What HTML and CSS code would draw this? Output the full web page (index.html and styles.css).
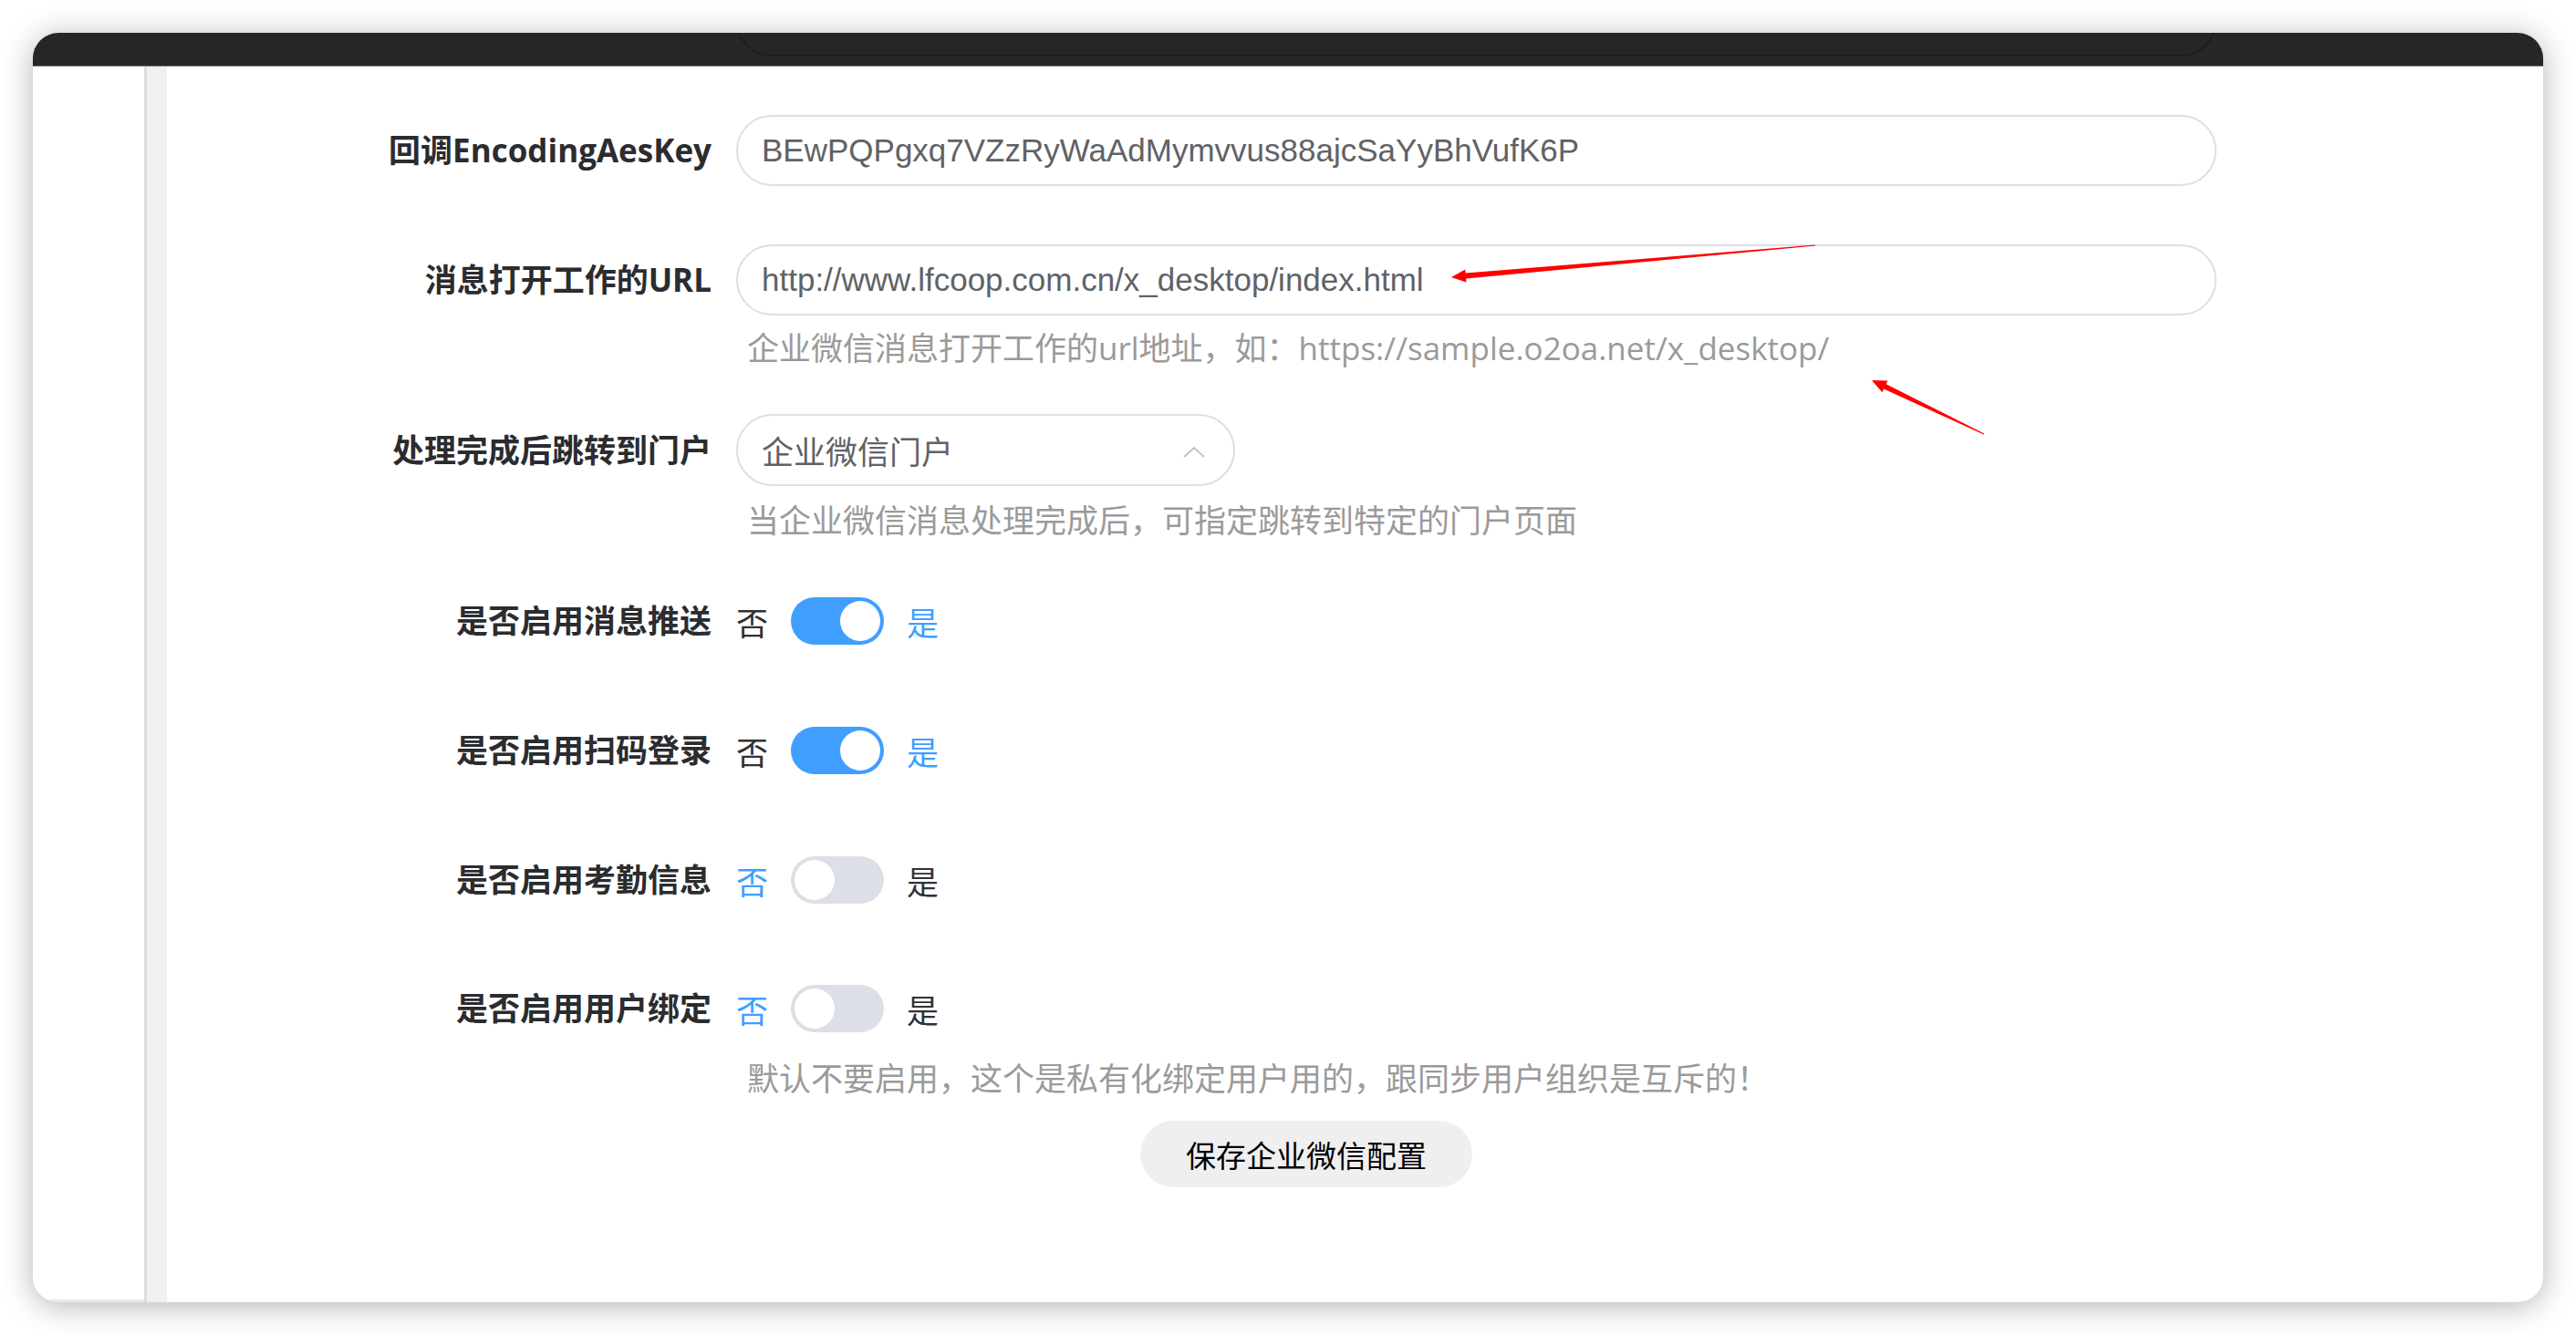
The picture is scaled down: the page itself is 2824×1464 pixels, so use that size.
FILE: index.html
```html
<!DOCTYPE html>
<html lang="zh-CN">
<head>
<meta charset="utf-8">
<title>企业微信配置</title>
<link rel="stylesheet" href="styles.css">
</head>
<body>
<div class="window">
  <div class="topbar">
    <div class="ghost-row">
      <div class="ghost-label">回调Token</div>
      <div class="ghost-input"></div>
    </div>
  </div>
  <div class="frame">
    <aside class="sidebar"></aside>
    <div class="gutter"></div>
    <main class="main">
      <div class="form-item item-key">
        <div class="label">回调EncodingAesKey</div>
        <div class="content">
          <div class="input">BEwPQPgxq7VZzRyWaAdMymvvus88ajcSaYyBhVufK6P</div>
        </div>
      </div>

      <div class="form-item item-url">
        <div class="label">消息打开工作的URL</div>
        <div class="content">
          <div class="input">http://www.lfcoop.com.cn/x_desktop/index.html</div>
          <div class="help help-url">企业微信消息打开工作的url地址，如：https://sample.o2oa.net/x_desktop/</div>
        </div>
      </div>

      <div class="form-item item-portal">
        <div class="label label-select">处理完成后跳转到门户</div>
        <div class="content">
          <div class="select">
            <span class="select-value">企业微信门户</span>
            <svg class="chevron" width="26" height="14" viewBox="0 0 26 14"><polyline points="2,12 13,2 24,12" fill="none" stroke="#c0c4cc" stroke-width="2"/></svg>
          </div>
          <div class="help help-portal">当企业微信消息处理完成后，可指定跳转到特定的门户页面</div>
        </div>
      </div>

      <div class="form-item item-switch">
        <div class="label label-switch">是否启用消息推送</div>
        <div class="content switch-row">
          <span class="sw-text">否</span>
          <span class="switch on"><span class="knob"></span></span>
          <span class="sw-text active">是</span>
        </div>
      </div>

      <div class="form-item item-switch">
        <div class="label label-switch">是否启用扫码登录</div>
        <div class="content switch-row">
          <span class="sw-text">否</span>
          <span class="switch on"><span class="knob"></span></span>
          <span class="sw-text active">是</span>
        </div>
      </div>

      <div class="form-item item-switch item-switch-3">
        <div class="label label-switch">是否启用考勤信息</div>
        <div class="content switch-row">
          <span class="sw-text active">否</span>
          <span class="switch"><span class="knob"></span></span>
          <span class="sw-text">是</span>
        </div>
      </div>

      <div class="form-item item-bind">
        <div class="label label-switch">是否启用用户绑定</div>
        <div class="content">
          <div class="switch-row">
            <span class="sw-text active">否</span>
            <span class="switch"><span class="knob"></span></span>
            <span class="sw-text">是</span>
          </div>
          <div class="help help-bind">默认不要启用，这个是私有化绑定用户用的，跟同步用户组织是互斥的！</div>
        </div>
      </div>

      <div class="button-row">
        <button class="save-btn" type="button">保存企业微信配置</button>
      </div>
    </main>
  </div>
</div>

<svg class="annotations" width="2824" height="1464" viewBox="0 0 2824 1464">
  <polygon fill="#ff0000" points="1591,304 1606.3,295.6 1606.6,299.6 1989.9,268.4 1990.1,269.6 1607.2,305.6 1607.5,309.6"/>
  <polygon fill="#ff0000" points="2052,417 2069.4,417.6 2067.7,421.2 2175.3,475.5 2174.7,476.5 2065.1,426.6 2063.4,430.2"/>
</svg>
</body>
</html>
```

FILE: styles.css
```css
html, body {
  margin: 0;
  padding: 0;
}

body {
  position: relative;
  width: 2824px;
  height: 1464px;
  overflow: hidden;
  background: #ffffff;
  font-family: "Open Sans", "Noto Sans CJK SC", sans-serif;
}

.window {
  margin: 36px 0 0 36px;
  width: 2752px;
  height: 1392px;
  border-radius: 28px;
  overflow: hidden;
  background: #ffffff;
  box-shadow: 0 4px 34px rgba(0, 0, 0, 0.30);
  display: flex;
  flex-direction: column;
}

.topbar {
  height: 36px;
  flex: 0 0 36px;
  background: #262626;
  border-bottom: 1px solid #808080;
  overflow: hidden;
}

.ghost-row {
  display: flex;
  align-items: flex-start;
  margin-top: -52px;
  margin-left: 371px;
}

.ghost-label {
  width: 400px;
  box-sizing: border-box;
  padding-right: 27px;
  margin-top: -14px;
  text-align: right;
  font-weight: 700;
  font-size: 35px;
  line-height: 78px;
  color: #141414;
}

.ghost-input {
  width: 1623px;
  height: 78px;
  box-sizing: border-box;
  border: 2px solid #1e1e1e;
  border-radius: 40px;
}

.frame {
  flex: 1;
  display: flex;
  min-height: 0;
}

.sidebar {
  width: 122px;
  flex: 0 0 122px;
  background: #ffffff;
  border-bottom: 3px solid #e6e8f0;
  box-sizing: border-box;
}

.gutter {
  width: 25px;
  flex: 0 0 25px;
  box-sizing: border-box;
  background: #f0f0f0;
  border-left: 3px solid #dcdcdc;
}

.main {
  flex: 1;
  padding: 53px 0 0 224px;
  box-sizing: border-box;
}

.form-item {
  display: flex;
  align-items: flex-start;
}

.item-key { margin-bottom: 64px; }
.item-url { margin-bottom: 47px; }
.item-portal { margin-bottom: 45px; }
.item-switch { margin-bottom: 62px; }
.item-switch-3 { margin-bottom: 61px; }

.label {
  width: 400px;
  flex: 0 0 400px;
  box-sizing: border-box;
  padding-right: 27px;
  text-align: right;
  font-weight: 700;
  font-size: 35px;
  line-height: 78px;
  color: #2b2c2f;
  white-space: nowrap;
}

.label-select { line-height: 79px; }
.label-switch { line-height: 80px; }

.content {
  display: flex;
  flex-direction: column;
}

.input {
  width: 1623px;
  height: 78px;
  box-sizing: border-box;
  border: 2px solid #dcdfe6;
  border-radius: 40px;
  padding: 0 26px;
  display: flex;
  align-items: center;
  font-family: "Liberation Sans", "Noto Sans CJK SC", sans-serif;
  font-size: 35px;
  color: #606266;
  white-space: nowrap;
}

.select {
  width: 547px;
  height: 79px;
  box-sizing: border-box;
  border: 2px solid #dcdfe6;
  border-radius: 40px;
  padding: 0 30px 0 26px;
  display: flex;
  align-items: center;
  justify-content: space-between;
  font-family: "Noto Sans CJK SC", sans-serif;
  font-size: 35px;
  color: #606266;
}

.select-value {
  line-height: 1;
}

.chevron {
  display: block;
  margin-top: 4px;
}

.help {
  padding-left: 12px;
  font-size: 35px;
  line-height: 50px;
  color: #9a9a9a;
  white-space: nowrap;
}

.help-url { margin-top: 11px; }
.help-portal { margin-top: 13px; }
.help-bind { margin-top: 12px; }

.switch-row {
  display: flex;
  flex-direction: row;
  align-items: center;
  height: 80px;
}

.sw-text {
  font-family: "Noto Sans CJK SC", sans-serif;
  font-size: 35px;
  line-height: 1;
  color: #303133;
}

.sw-text.active {
  color: #409eff;
}

.switch {
  position: relative;
  width: 102px;
  height: 52px;
  margin: 0 25px;
  border-radius: 26px;
  background: #dcdfe6;
  display: flex;
  align-items: center;
  padding: 0 4px;
  box-sizing: border-box;
}

.switch.on {
  background: #409eff;
  justify-content: flex-end;
}

.knob {
  width: 44px;
  height: 44px;
  border-radius: 50%;
  background: #ffffff;
}

.button-row {
  margin-top: 21px;
  padding-left: 843px;
}

.save-btn {
  width: 364px;
  height: 73px;
  border: none;
  border-radius: 37px;
  background: #efefef;
  color: #000000;
  font-family: "Noto Sans CJK SC", sans-serif;
  font-size: 33px;
  padding: 0;
}

.annotations {
  position: absolute;
  top: 0;
  left: 0;
  pointer-events: none;
}
```
